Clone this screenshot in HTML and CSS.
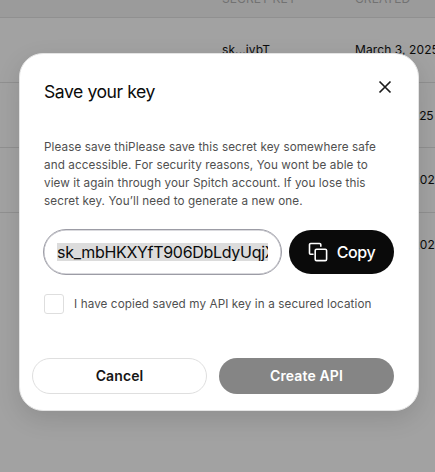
FILE: index.html
```html
<!DOCTYPE html>
<html lang="en">
<head>
<meta charset="utf-8">
<title>API keys</title>
<link rel="stylesheet" href="styles.css">
</head>
<body>
<main class="page">
  <div class="row head"><span>SECRET KEY</span><span>CREATED</span></div>
  <div class="row"><span>sk...jvbT</span><span>March 3, 2025</span></div>
  <div class="row"><span></span><span class="r2">March 1, 2025</span></div>
  <div class="row"><span></span><span class="r3">March 11, 2025</span></div>
  <div class="row last"><span></span><span class="r3">March 11, 2025</span></div>
</main>
<div class="overlay">
  <section class="modal" role="dialog" aria-labelledby="title">
    <header class="top">
      <h1 id="title">Save your key</h1>
      <button class="close" aria-label="Close"><svg width="14" height="14" viewBox="0 0 14 14" fill="none" stroke="#1c1c1c" stroke-width="1.7"><path d="M1.5 1.5l11 11M12.5 1.5l-11 11"/></svg></button>
    </header>
    <p class="copytext">Please save thiPlease save this secret key somewhere safe<br>and accessible. For security reasons, You wont be able to<br>view it again through your Spitch account. If you lose this<br>secret key. You’ll need to generate a new one.</p>
    <div class="keyrow">
      <div class="field"><div class="clip"><span class="sel">sk_mbHKXYfT906DbLdyUqjX</span></div></div>
      <button class="copy"><svg width="20" height="20" viewBox="0 0 20 20" fill="none" stroke="#fff" stroke-width="1.6" stroke-linejoin="round"><rect x="7.2" y="7.2" width="11.4" height="11.4" rx="1.4"/><path d="M5 12.8V12.3H2.5a1 1 0 0 1-1-1V2.7a1.2 1.2 0 0 1 1.2-1.2h8.9a1.2 1.2 0 0 1 1.2 1.2v2.1"/></svg><span>Copy</span></button>
    </div>
    <label class="check"><span class="box"></span><span class="checktext">I have copied saved my API key in a secured location</span></label>
    <footer class="actions">
      <button class="cancel">Cancel</button>
      <button class="create">Create API</button>
    </footer>
  </section>
</div>
</body>
</html>
```
FILE: styles.css
```css
* { box-sizing: border-box; }
body { margin: 0; width: 435px; height: 472px; overflow: hidden; background: #a2a2a2; font-family: Inter, sans-serif; }
button { margin: 0; padding: 0; border: 0; background: none; font-family: inherit; }
.page { height: 472px; overflow: hidden; }
.row { display: grid; grid-template-columns: 133px 200px; padding-left: 222px; height: 65px; align-items: center; border-bottom: 1px solid #909090; font-size: 12px; color: #0b0b0b; white-space: nowrap; letter-spacing: .1px; }
.row span { padding-bottom: 1px; }
.row .r2 { padding: 0; letter-spacing: -.15px; }
.row .r3 { padding-left: .5px; }
.row.last .r3 { padding-bottom: 3px; }
.row.head { height: 18px; background: #9b9b9b; color: #727272; align-items: start; line-height: 14px; }
.row.head span { margin-top: -8px; padding: 0; }
.row.last { border-bottom: 0; }
.overlay { position: absolute; inset: 0; padding: 53px 16px 0 19px; }
.modal { width: 400px; height: 358px; border: 1px solid #e4e4e4; border-radius: 24px; background: #fff; padding: 0 24px 0 12px; box-shadow: 0 8px 24px rgba(0,0,0,.12); }
.top { display: flex; justify-content: space-between; height: 84px; padding: 26px 2px 0 12px; }
h1 { margin: 0; font-size: 17.6px; line-height: 24px; font-weight: 400; color: #0b0b0b; white-space: nowrap; letter-spacing: -.45px; }
.close { width: 14px; height: 14px; display: flex; }
.copytext { margin: 0 0 0 12px; font-size: 11.7px; line-height: 18px; color: #505050; white-space: nowrap; letter-spacing: .1px; }
.keyrow { display: flex; gap: 7px; margin: 19px 0 0 11px; }
.field { width: 239px; height: 46px; border: 1px solid #9c9ca5; box-shadow: inset 0 0 0 .5px #b5b5bd; border-radius: 23px; padding: 13px 13px 0; }
.clip { width: 211px; overflow: hidden; white-space: nowrap; font-size: 16px; line-height: 18px; color: #0b0b0b; letter-spacing: -.3px; }
.sel { display: inline-block; background: #dcdcdc; }
.copy { width: 105px; height: 44px; margin-top: 1px; border-radius: 22px; background: #0a0a0a; color: #fff; display: flex; align-items: center; justify-content: center; gap: 9px; font-size: 16px; font-weight: 500; letter-spacing: -.4px; }
.check { display: flex; align-items: center; gap: 10px; margin: 19px 0 0 12px; height: 20px; }
.box { width: 20px; height: 20px; border: 1px solid #dedede; border-radius: 3px; }
.checktext { font-size: 11.7px; color: #505050; letter-spacing: .1px; white-space: nowrap; padding-bottom: 1px; }
.actions { display: flex; gap: 12px; margin-top: 44px; }
.actions button { height: 36px; width: 175px; border-radius: 18px; font-size: 14px; font-weight: 600; letter-spacing: .12px; padding-bottom: 2px; }
.cancel { border: 1px solid #dfdfdf; color: #161616; }
.create { background: #858585; color: #fff; }
```
